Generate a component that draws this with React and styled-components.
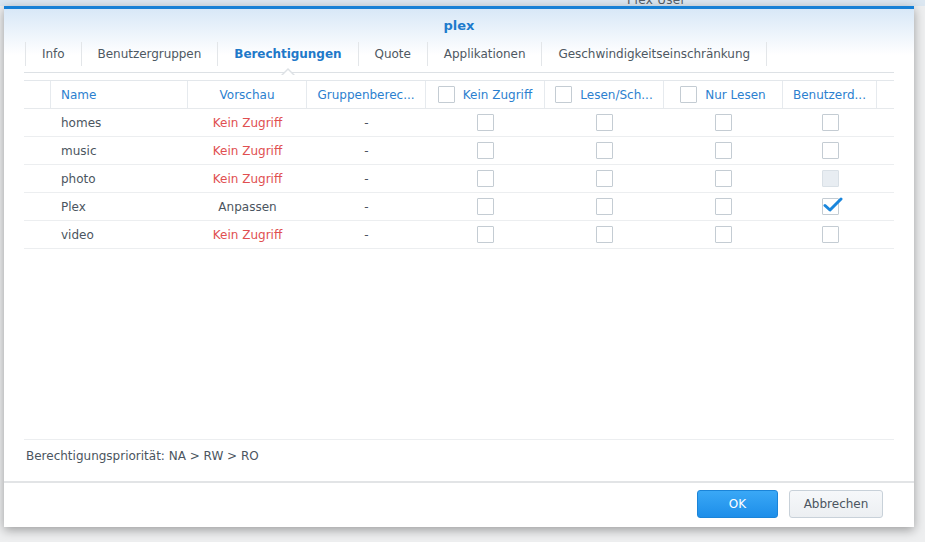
import React from "react";
import styled, { createGlobalStyle } from "styled-components";

const GlobalStyle = createGlobalStyle`
  html, body {
    margin: 0;
    padding: 0;
    width: 925px;
    height: 542px;
    overflow: hidden;
    background: #f2f3f4;
    font-family: "DejaVu Sans", Verdana, sans-serif;
  }
`;

const Page = styled.div`
  position: relative;
  width: 925px;
  height: 542px;
  padding-top: 6px;
  box-sizing: border-box;
  background: linear-gradient(#dce7f1 0 6px, #eeeff0 6px);
`;

const BehindTitle = styled.div`
  position: absolute;
  top: -7px;
  left: 627px;
  font-size: 12px;
  letter-spacing: 0.3px;
  color: #555d66;
`;

const Dialog = styled.div`
  margin-left: 4px;
  width: 910px;
  height: 521px;
  box-sizing: border-box;
  border-top: 3px solid #1680d6;
  background: linear-gradient(#d8e8f7 0px, #ffffff 46px);
  box-shadow: 0 3px 10px rgba(0, 0, 0, 0.35);
  display: flex;
  flex-direction: column;
  position: relative;
`;

const Title = styled.div`
  height: 31px;
  padding-top: 1px;
  box-sizing: border-box;
  display: flex;
  align-items: center;
  justify-content: center;
  font-size: 13px;
  font-weight: bold;
  color: #1e7bcc;
`;

const Content = styled.div`
  flex: 1;
  display: flex;
  flex-direction: column;
  padding: 0 20px;
`;

const Tabs = styled.div`
  height: 32px;
  display: flex;
  align-items: flex-start;
  border-bottom: 1px solid #dde1e5;
  padding-left: 1px;
  position: relative;
`;

const Tab = styled.div`
  position: relative;
  height: 24px;
  margin-top: 2px;
  padding: 0 16px;
  display: flex;
  align-items: center;
  font-size: 12px;
  letter-spacing: -0.04px;
  color: ${p => (p.$active ? "#1f79c9" : "#4e5862")};
  font-weight: ${p => (p.$active ? "bold" : "normal")};
  border-right: 1px solid #e3e6e9;
  border-left: ${p => (p.$first ? "1px solid #e3e6e9" : "none")};

  ${p =>
    p.$active &&
    `
    &::before, &::after {
      content: "";
      position: absolute;
      left: 50%;
      width: 0;
      height: 0;
      border-style: solid;
    }
    &::before {
      bottom: -9px;
      margin-left: -7px;
      border-width: 0 7px 7px 7px;
      border-color: transparent transparent #dde1e5 transparent;
    }
    &::after {
      bottom: -10px;
      margin-left: -6px;
      border-width: 0 6px 6px 6px;
      border-color: transparent transparent #ffffff transparent;
    }
  `}
`;

const Grid = styled.div`
  margin-top: 7px;
  border-top: 1px solid #e3e7eb;
`;

const cols = "27px 137px 119px 119px 119px 119px 119px 94px 17px";

const HeadRow = styled.div`
  display: grid;
  grid-template-columns: ${cols};
  height: 27px;
  border-bottom: 1px solid #e6e9ec;
`;

const Row = styled.div`
  display: grid;
  grid-template-columns: ${cols};
  height: 27px;
  border-bottom: 1px solid #eceef0;
`;

const HeadCell = styled.div`
  display: flex;
  align-items: center;
  justify-content: ${p => (p.$left ? "flex-start" : "center")};
  padding-left: ${p => (p.$left ? "10px" : "0")};
  gap: 8px;
  font-size: 12px;
  color: #2c7fcf;
  white-space: nowrap;
  overflow: hidden;
  border-right: ${p => (p.$last ? "none" : "1px solid #e6eaee")};
`;

const Cell = styled.div`
  display: flex;
  align-items: center;
  justify-content: ${p => (p.$left ? "flex-start" : "center")};
  padding-left: ${p => (p.$left ? "10px" : "0")};
  font-size: 12px;
  color: ${p => (p.$red ? "#e04f51" : "#4b5560")};
  white-space: nowrap;
`;

const Box = styled.span`
  position: relative;
  display: inline-block;
  width: 17px;
  height: 17px;
  box-sizing: border-box;
  border: 1px solid ${p => (p.$disabled ? "#d9e0e6" : "#c4ccd3")};
  background: ${p => (p.$disabled ? "#e8edf2" : "#fff")};
  border-radius: 1px;
  flex-shrink: 0;
`;

const Check = styled.svg`
  position: absolute;
  left: 0px;
  top: -3px;
`;

const Spacer = styled.div`
  flex: 1;
`;

const Priority = styled.div`
  border-top: 1px solid #eceef0;
  height: 42px;
  box-sizing: border-box;
  padding: 9px 0 0 2px;
  line-height: 14px;
  font-size: 12px;
  color: #4b5560;
`;

const Footer = styled.div`
  border-top: 2px solid #e2e4e6;
  height: 46px;
  display: flex;
  justify-content: flex-end;
  align-items: flex-start;
  gap: 11px;
  padding: 7px 31px 0 0;
  box-sizing: border-box;
`;

const Button = styled.button`
  height: 28px;
  width: ${p => p.$w}px;
  border-radius: 3px;
  font-family: "DejaVu Sans", Verdana, sans-serif;
  font-size: 12px;
  cursor: pointer;
  border: 1px solid ${p => (p.$primary ? "#1b84d8" : "#c8d1d9")};
  color: ${p => (p.$primary ? "#ffffff" : "#4b5560")};
  background: ${p =>
    p.$primary
      ? "linear-gradient(#3aa8f6, #1d8ee9)"
      : "linear-gradient(#f6f8fa, #eceff2)"};
`;

const CheckBox = ({ checked, disabled }) => (
  <Box $disabled={disabled}>
    {checked && (
      <Check width="21" height="17" viewBox="0 0 21 17">
        <path
          d="M2 9.5 L7 14 L18 3"
          fill="none"
          stroke="#1a86dc"
          strokeWidth="3"
          strokeLinecap="round"
          strokeLinejoin="round"
        />
      </Check>
    )}
  </Box>
);

const rows = [
  { name: "homes", preview: "Kein Zugriff", red: true },
  { name: "music", preview: "Kein Zugriff", red: true },
  { name: "photo", preview: "Kein Zugriff", red: true, custom: "disabled" },
  { name: "Plex", preview: "Anpassen", red: false, custom: "checked" },
  { name: "video", preview: "Kein Zugriff", red: true },
];

const tabs = [
  "Info",
  "Benutzergruppen",
  "Berechtigungen",
  "Quote",
  "Applikationen",
  "Geschwindigkeitseinschränkung",
];

export default function App() {
  return (
    <>
      <GlobalStyle />
      <Page>
        <BehindTitle>Plex User</BehindTitle>
        <Dialog>
          <Title>plex</Title>
          <Content>
            <Tabs>
              {tabs.map((t, i) => (
                <Tab key={t} $first={i === 0} $active={t === "Berechtigungen"}>
                  {t}
                </Tab>
              ))}
            </Tabs>
            <Grid>
              <HeadRow>
                <HeadCell />
                <HeadCell $left>Name</HeadCell>
                <HeadCell>Vorschau</HeadCell>
                <HeadCell>Gruppenberec...</HeadCell>
                <HeadCell>
                  <CheckBox />
                  Kein Zugriff
                </HeadCell>
                <HeadCell>
                  <CheckBox />
                  Lesen/Sch...
                </HeadCell>
                <HeadCell>
                  <CheckBox />
                  Nur Lesen
                </HeadCell>
                <HeadCell>Benutzerd...</HeadCell>
                <HeadCell $last />
              </HeadRow>
              {rows.map(r => (
                <Row key={r.name}>
                  <Cell />
                  <Cell $left>{r.name}</Cell>
                  <Cell $red={r.red}>{r.preview}</Cell>
                  <Cell>-</Cell>
                  <Cell>
                    <CheckBox />
                  </Cell>
                  <Cell>
                    <CheckBox />
                  </Cell>
                  <Cell>
                    <CheckBox />
                  </Cell>
                  <Cell>
                    <CheckBox
                      disabled={r.custom === "disabled"}
                      checked={r.custom === "checked"}
                    />
                  </Cell>
                  <Cell />
                </Row>
              ))}
            </Grid>
            <Spacer />
            <Priority>Berechtigungspriorität: NA &gt; RW &gt; RO</Priority>
          </Content>
          <Footer>
            <Button $primary $w={81}>OK</Button>
            <Button $w={94}>Abbrechen</Button>
          </Footer>
        </Dialog>
      </Page>
    </>
  );
}
